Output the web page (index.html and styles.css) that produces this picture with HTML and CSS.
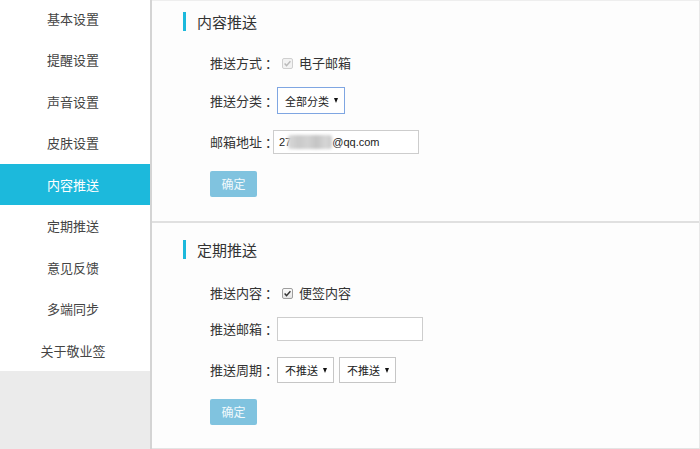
FILE: index.html
```html
<!DOCTYPE html>
<html lang="zh-CN">
<head>
<meta charset="utf-8">
<title>设置</title>
<link rel="stylesheet" href="styles.css">
</head>
<body>
<div class="app">
  <nav class="sidebar">
    <ul class="menu">
      <li class="menu-item">基本设置</li>
      <li class="menu-item">提醒设置</li>
      <li class="menu-item">声音设置</li>
      <li class="menu-item">皮肤设置</li>
      <li class="menu-item active">内容推送</li>
      <li class="menu-item">定期推送</li>
      <li class="menu-item">意见反馈</li>
      <li class="menu-item">多端同步</li>
      <li class="menu-item">关于敬业签</li>
    </ul>
    <div class="sidebar-fill"></div>
  </nav>
  <main class="content">
    <section class="panel panel-first">
      <h2 class="panel-title">内容推送</h2>
      <div class="form">
        <div class="row row-a1">
          <span class="label">推送方式<span class="colon">：</span></span>
          <span class="check check-disabled"><svg width="11" height="11" viewBox="0 0 11 11"><path d="M2.6 5.6 L4.5 7.6 L8.4 3.2" fill="none" stroke="#b9b9b9" stroke-width="1.4"/></svg></span>
          <span class="check-text">电子邮箱</span>
        </div>
        <div class="row row-a2">
          <span class="label">推送分类<span class="colon">：</span></span>
          <span class="select select-focus select-wide"><span class="select-text">全部分类</span><span class="arrow"></span></span>
        </div>
        <div class="row row-a3">
          <span class="label">邮箱地址<span class="colon">：</span></span>
          <span class="input input-email"><span class="email-text">27</span><span class="blur"></span><span class="email-text">@qq.com</span></span>
        </div>
        <div class="btn-row btn-row-a"><span class="btn">确定</span></div>
      </div>
    </section>
    <section class="panel panel-second">
      <h2 class="panel-title">定期推送</h2>
      <div class="form">
        <div class="row row-b1">
          <span class="label">推送内容<span class="colon">：</span></span>
          <span class="check"><svg width="11" height="11" viewBox="0 0 11 11"><path d="M2.6 5.6 L4.5 7.6 L8.4 3.2" fill="none" stroke="#333" stroke-width="1.4"/></svg></span>
          <span class="check-text">便签内容</span>
        </div>
        <div class="row row-b2">
          <span class="label">推送邮箱<span class="colon">：</span></span>
          <span class="input input-plain"></span>
        </div>
        <div class="row row-b3">
          <span class="label">推送周期<span class="colon">：</span></span>
          <span class="select select-small"><span class="select-text">不推送</span><span class="arrow"></span></span>
          <span class="select select-small"><span class="select-text">不推送</span><span class="arrow"></span></span>
        </div>
        <div class="btn-row btn-row-b"><span class="btn">确定</span></div>
      </div>
    </section>
  </main>
</div>
</body>
</html>
```
FILE: styles.css
```css
html, body {
  margin: 0;
  padding: 0;
  height: 449px;
  overflow: hidden;
  background: #fdfdfd;
}

.app {
  display: flex;
  height: 449px;
  font-family: "Noto Sans CJK SC", "Microsoft YaHei", sans-serif;
  color: #333;
}

.sidebar {
  width: 150px;
  flex: none;
  display: flex;
  flex-direction: column;
  background: #ebebeb;
  border-right: 2px solid #d4d4d4;
  overflow: hidden;
}

.menu {
  list-style: none;
  margin: -2.5px 0 0 0;
  padding: 0;
  background: #fff;
}

.menu-item {
  height: 41.5px;
  line-height: 41.5px;
  text-align: center;
  font-size: 13px;
  color: #444;
  padding-right: 4px;
}

.menu-item.active {
  background: #1cb9dc;
  color: #fff;
}

.sidebar-fill {
  flex: 1;
  background: #ebebeb;
}

.content {
  flex: 1;
  background: #fdfdfd;
  border-top: 1px solid #eeeeee;
  border-right: 1px solid #e8e8e8;
  border-bottom: 1px solid #e4e4e4;
}

.panel {
  padding: 11px 0 24px 31px;
}

.panel-first {
  border-bottom: 2px solid #e0e0e0;
}

.panel-second {
  padding-top: 17px;
}

.panel-title {
  margin: 0;
  display: flex;
  align-items: center;
  height: 19px;
  font-size: 15px;
  font-weight: normal;
  color: #333;
  line-height: 19px;
}

.panel-title::before {
  content: "";
  width: 3px;
  height: 19px;
  background: #1cb9dc;
  margin-right: 11px;
}

.form {
  padding-left: 27px;
}

.row {
  display: flex;
  align-items: center;
  height: 28px;
  font-size: 13px;
}

.row-a1 { margin-top: 18px; }
.row-a2 { margin-top: 9.5px; }
.row-a3 { margin-top: 13.5px; }
.row-b1 { margin-top: 20px; }
.row-b2 { margin-top: 8px; }
.row-b3 { margin-top: 13px; }

.label {
  width: 67px;
  flex: none;
  line-height: 20px;
  white-space: nowrap;
}

.colon {
  margin-left: 3px;
}

.check {
  width: 11px;
  height: 11px;
  box-sizing: border-box;
  border: 1px solid #9e9e9e;
  border-radius: 2px;
  background: linear-gradient(#fbfbfb, #e6e6e6);
  margin-left: 5px;
  margin-right: 6px;
  display: flex;
  align-items: center;
  justify-content: center;
}

.check svg {
  width: 11px;
  height: 11px;
  flex: none;
}

.check-disabled {
  border-color: #cfcfcf;
  background: #f2f2f2;
}

.check-text {
  line-height: 20px;
}

.select {
  display: flex;
  align-items: center;
  justify-content: space-between;
  box-sizing: border-box;
  height: 26px;
  border: 1px solid #c6c6c6;
  background: #fff;
  padding: 0 6px 0 7px;
  font-size: 11px;
  color: #222;
}

.select-wide {
  width: 68px;
  height: 27px;
}

.select-focus {
  border-color: #7fa6e2;
}

.select-small {
  width: 57px;
  margin-right: 5px;
}

.select-text {
  line-height: 14px;
}

.arrow {
  width: 0;
  height: 0;
  border-left: 2.5px solid transparent;
  border-right: 2.5px solid transparent;
  border-top: 5px solid #111;
}

.input {
  display: flex;
  align-items: center;
  box-sizing: border-box;
  height: 24px;
  width: 146px;
  border: 1px solid #cdcdcd;
  background: #fff;
}

.input-email {
  margin-left: -4px;
  padding-left: 5px;
}

.email-text {
  font-family: "Liberation Sans", Arial, sans-serif;
  font-size: 11px;
  color: #222;
}

.blur {
  width: 44px;
  height: 14px;
  margin-left: -3px;
  background: linear-gradient(90deg, #d8d8d8 0%, #c9c9c9 25%, #d2d2d2 45%, #c4c4c4 65%, #d6d6d6 85%, #cacaca 100%);
  filter: blur(1.5px);
  border-radius: 3px;
}

.btn-row {
  margin-top: 15px;
  display: flex;
}

.btn {
  width: 47px;
  height: 26px;
  line-height: 26px;
  text-align: center;
  background: #80c3df;
  border-radius: 2px;
  color: #f1f9fc;
  font-size: 12px;
}
```
